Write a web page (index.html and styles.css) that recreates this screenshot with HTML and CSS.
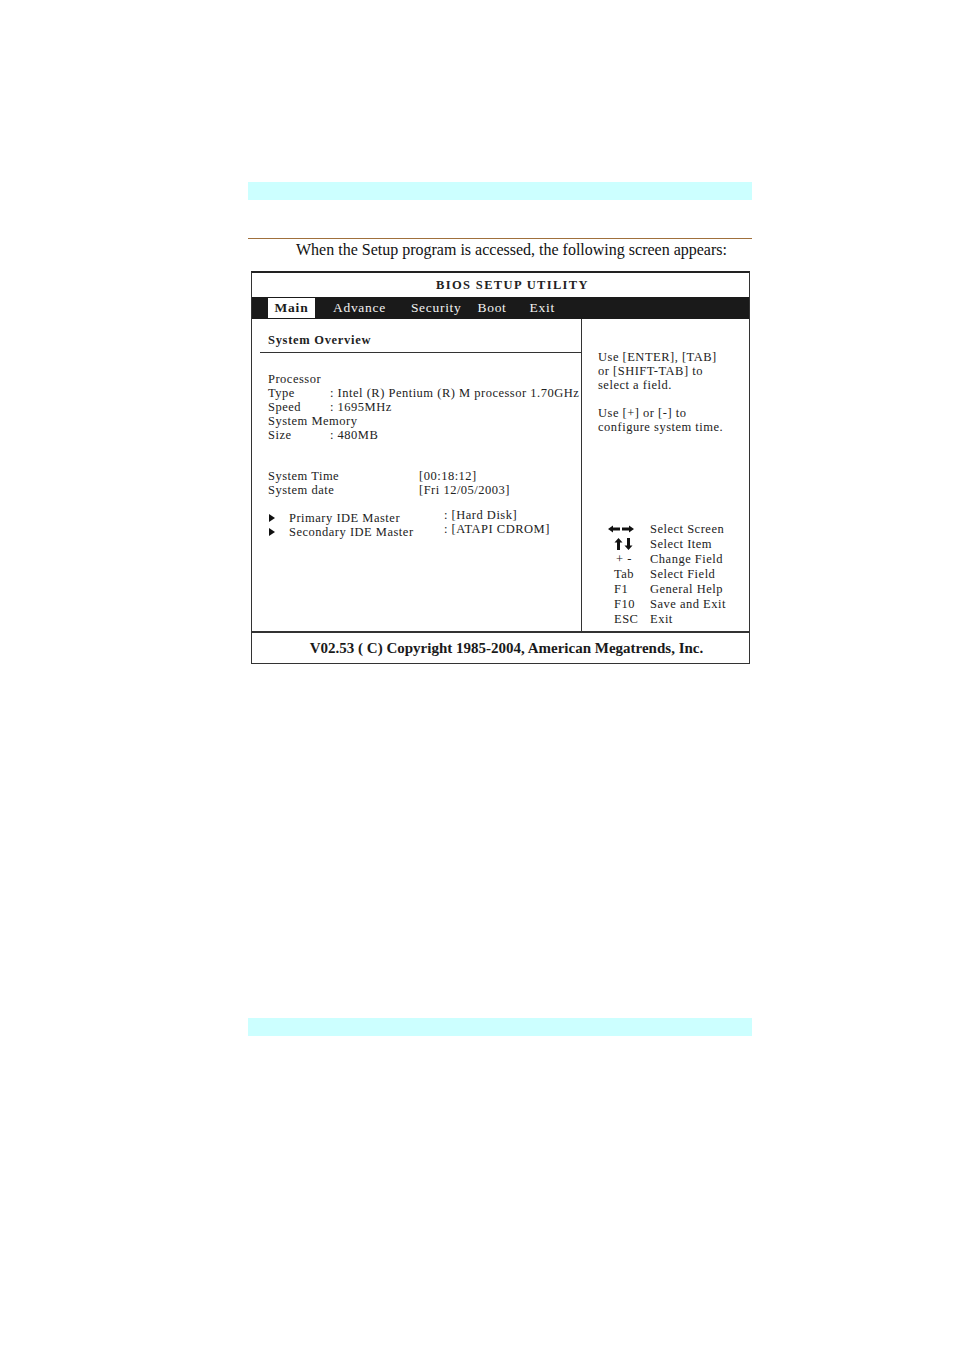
FILE: index.html
```html
<!DOCTYPE html>
<html>
<head>
<meta charset="utf-8">
<link rel="stylesheet" href="styles.css">
</head>
<body>
<div class="page">
  <div class="band band-top"></div>
  <div class="rule"></div>
  <p class="intro">When the Setup program is accessed, the following screen appears:</p>
  <div class="bios">
    <div class="bios-title">BIOS SETUP UTILITY</div>
    <div class="menu">
      <span class="tab active">Main</span>
      <span class="tab t-adv">Advance</span>
      <span class="tab t-sec">Security</span>
      <span class="tab t-boot">Boot</span>
      <span class="tab t-exit">Exit</span>
    </div>
    <div class="body">
      <div class="left">
        <div class="heading">System Overview</div>
        <div class="hr"></div>
        <div class="group g-proc">
          <div class="row"><span>Processor</span></div>
          <div class="row"><span class="lab">Type</span><span class="val">: <span class="tight">Intel (R) Pentium (R) M processor 1.70GHz</span></span></div>
          <div class="row"><span class="lab">Speed</span><span class="val">: 1695MHz</span></div>
          <div class="row"><span>System Memory</span></div>
          <div class="row"><span class="lab">Size</span><span class="val">: 480MB</span></div>
        </div>
        <div class="group g-time">
          <div class="row"><span class="lab2">System Time</span><span class="val">[00:18:12]</span></div>
          <div class="row"><span class="lab2">System date</span><span class="val">[Fri 12/05/2003]</span></div>
        </div>
        <div class="group g-ide">
          <div class="row ide"><span class="tri"></span><span class="lab3">Primary IDE Master</span><span class="val up">: [Hard Disk]</span></div>
          <div class="row ide"><span class="tri"></span><span class="lab3">Secondary IDE Master</span><span class="val up">: [ATAPI CDROM]</span></div>
        </div>
      </div>
      <div class="right">
        <div class="help">
          <div>Use [ENTER], [TAB]</div>
          <div>or [SHIFT-TAB] to</div>
          <div>select a field.</div>
        </div>
        <div class="help h2">
          <div>Use [+] or [-] to</div>
          <div>configure system time.</div>
        </div>
        <div class="keys">
          <span class="k icon"><svg width="26" height="8" viewBox="0 0 26 8"><path d="M0 4 L5 0.5 L5 2.6 L12 2.6 L12 5.4 L5 5.4 L5 7.5 Z" fill="#111"/><path d="M26 4 L21 0.5 L21 2.6 L14 2.6 L14 5.4 L21 5.4 L21 7.5 Z" fill="#111"/></svg></span><span class="d">Select Screen</span>
          <span class="k icon ud"><svg width="20" height="12" viewBox="0 0 20 12"><path d="M4.5 0 L8.5 4.5 L6 4.5 L6 12 L3 12 L3 4.5 L0.5 4.5 Z" fill="#111"/><path d="M14.5 12 L18.5 7.5 L16 7.5 L16 0 L13 0 L13 7.5 L10.5 7.5 Z" fill="#111"/></svg></span><span class="d">Select Item</span>
          <span class="k pm">+ -</span><span class="d">Change Field</span>
          <span class="k">Tab</span><span class="d">Select Field</span>
          <span class="k">F1</span><span class="d">General Help</span>
          <span class="k">F10</span><span class="d">Save and Exit</span>
          <span class="k">ESC</span><span class="d">Exit</span>
        </div>
      </div>
    </div>
    <div class="footer">V02.53 ( C) Copyright 1985-2004, American Megatrends, Inc.</div>
  </div>
  <div class="spacer"></div>
  <div class="band band-bottom"></div>
</div>
</body>
</html>
```

FILE: styles.css
```css
html, body {
  margin: 0;
  padding: 0;
  background: #fff;
}
.page {
  width: 954px;
  height: 1351px;
  position: relative;
  font-family: "Liberation Serif", "Times New Roman", serif;
  color: #1e1e1e;
  padding-top: 182px;
  box-sizing: border-box;
}
.band {
  margin-left: 248px;
  width: 504px;
  height: 18px;
  background: #ccffff;
}
.rule {
  margin: 38px 0 0 248px;
  width: 504px;
  height: 1px;
  background: #a0703c;
}
.intro {
  margin: 0;
  padding-left: 296px;
  font-size: 16px;
  line-height: 22px;
  height: 32px;
  color: #111;
}
.bios {
  margin-left: 251px;
  width: 499px;
  box-sizing: border-box;
  border: 1px solid #333;
  border-top: 2px solid #222;
  color: #222;
}
.bios-title {
  height: 24px;
  line-height: 25px;
  text-align: center;
  font-weight: bold;
  font-size: 12.5px;
  letter-spacing: 1.35px;
  padding-left: 24px;
}
.menu {
  height: 22px;
  background: #1a1a1a;
  display: flex;
  align-items: center;
  padding-left: 16px;
  color: #f2f2f2;
  font-size: 13.5px;
  letter-spacing: 0.7px;
}
.tab {
  line-height: 20px;
}
.tab.active {
  background: #fff;
  color: #1a1a1a;
  font-weight: bold;
  width: 47px;
  height: 20px;
  text-align: center;
  letter-spacing: 0.8px;
}
.t-adv { margin-left: 18px; }
.t-sec { margin-left: 25px; }
.t-boot { margin-left: 16px; }
.t-exit { margin-left: 23px; }
.body {
  display: grid;
  grid-template-columns: 330px 1fr;
  height: 312px;
}
.left {
  border-right: 1px solid #333;
  font-size: 12.5px;
  letter-spacing: 0.5px;
  line-height: 14px;
  position: relative;
  min-width: 0;
}
.heading {
  margin: 13px 0 0 16px;
  font-weight: bold;
  letter-spacing: 0.7px;
  line-height: 16px;
}
.hr {
  margin: 4px 0 0 8px;
  height: 1px;
  background: #333;
}
.group {
  padding-left: 16px;
}
.g-proc { margin-top: 19px; }
.g-time { margin-top: 27px; }
.g-ide { margin-top: 14px; }
.row {
  display: flex;
  white-space: nowrap;
  height: 14px;
}
.row > span { flex-shrink: 0; }
.lab { width: 62px; }
.lab2 { width: 151px; }
.tight { letter-spacing: 0.5px; }
.ide {
  align-items: center;
}
.tri {
  width: 0;
  height: 0;
  border-left: 6px solid #111;
  border-top: 4px solid transparent;
  border-bottom: 4px solid transparent;
  margin-left: 1px;
  margin-right: 14px;
}
.lab3 { width: 155px; }
.val.up {
  position: relative;
  top: -3px;
}
.right {
  font-size: 12.5px;
  letter-spacing: 0.5px;
  line-height: 14px;
  padding-left: 16px;
}
.help { margin-top: 31px; }
.help.h2 { margin-top: 14px; }
.keys {
  margin-top: 87px;
  display: grid;
  grid-template-columns: 42px auto;
  grid-auto-rows: 15px;
  align-items: center;
  margin-left: 10px;
}
.k {
  padding-left: 6px;
}
.k.icon {
  padding-left: 0;
  display: flex;
  align-items: center;
}
.k.icon.ud { padding-left: 6px; }
.k.icon svg { display: block; }
.k.pm { padding-left: 8px; }
.footer {
  border-top: 2px solid #333;
  height: 30px;
  line-height: 31px;
  text-align: center;
  font-weight: bold;
  font-size: 15px;
  padding-left: 12px;
  color: #1a1a1a;
}
.spacer {
  height: 354px;
}
```
